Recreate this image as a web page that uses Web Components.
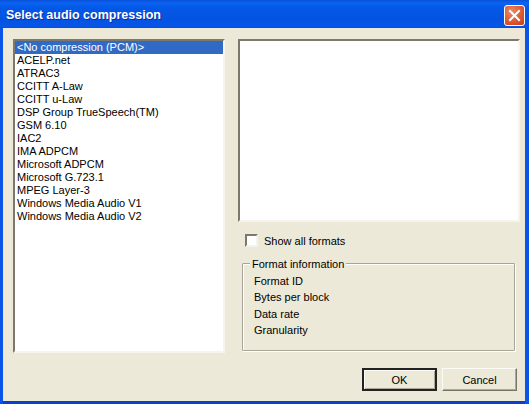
<!DOCTYPE html>
<html><head><meta charset="utf-8"><style>
html,body{margin:0;padding:0;width:529px;height:404px;overflow:hidden;background:#0a3fd0}
body{font:11px "Liberation Sans",sans-serif;color:#000}
</style></head><body>
<xp-dialog heading="Select audio compression">
  <div slot="left">
    <xp-list>
      <xp-item selected>&lt;No compression (PCM)&gt;</xp-item>
      <xp-item>ACELP.net</xp-item><xp-item>ATRAC3</xp-item><xp-item>CCITT A-Law</xp-item><xp-item>CCITT u-Law</xp-item>
      <xp-item>DSP Group TrueSpeech(TM)</xp-item><xp-item>GSM 6.10</xp-item><xp-item>IAC2</xp-item><xp-item>IMA ADPCM</xp-item>
      <xp-item>Microsoft ADPCM</xp-item><xp-item>Microsoft G.723.1</xp-item><xp-item>MPEG Layer-3</xp-item>
      <xp-item>Windows Media Audio V1</xp-item><xp-item>Windows Media Audio V2</xp-item>
    </xp-list>
  </div>
  <xp-panel slot="right"></xp-panel>
  <xp-check slot="right">Show all formats</xp-check>
  <xp-group slot="right" legend="Format information">
    <span>Format ID</span><span>Bytes per block</span><span>Data rate</span><span>Granularity</span>
  </xp-group>
  <xp-button slot="buttons" default>OK</xp-button>
  <xp-button slot="buttons">Cancel</xp-button>
</xp-dialog>
<script>
function def(name,html,init){customElements.define(name,class extends HTMLElement{connectedCallback(){if(this.shadowRoot)return;const r=this.attachShadow({mode:'open'});r.innerHTML=html;if(init)init(this,r);}});}
def('xp-dialog',`<style>
:host{display:flex;flex-direction:column;width:529px;height:404px;box-sizing:border-box;background:linear-gradient(90deg,#0a55e8 0,#0a55e8 100%)}
.title{height:28px;flex:none;box-sizing:border-box;display:flex;align-items:center;justify-content:space-between;padding:2px 4px 0 6px;background:linear-gradient(#0a50d8 0,#0a64f2 3px,#0458e6 8px,#0453e2 20px,#0556ea 26px,#0a4cd4 28px);color:#fff;font:bold 12.5px "Liberation Sans",sans-serif;text-shadow:1px 1px 0 #0a2f9c}
.close{width:21px;height:21px;box-sizing:border-box;border:1px solid #fff;border-radius:3px;background:radial-gradient(circle at 35% 30%,#e88a6c,#dc5a34 55%,#c23c1c);display:flex;align-items:center;justify-content:center}
.body{flex:1;min-height:0;margin:0 4px 3px 3px;background:#ece9d8;display:flex;flex-direction:column;padding:11px 8px 10px 10px;box-shadow:0 3px 0 #0a3fc8}
.main{flex:none;height:314px;display:grid;grid-template-columns:212px 282px;column-gap:13px}
.right{display:flex;flex-direction:column;min-height:0}
.buttons{display:flex;justify-content:flex-end;gap:5px;margin-top:15px}
</style>
<div class="title"><span id="t"></span><div class="close"><svg width="13" height="13" viewBox="0 0 13 13"><path d="M2 2 L11 11 M11 2 L2 11" stroke="#fff" stroke-width="2" stroke-linecap="square" fill="none"/></svg></div></div>
<div class="body"><div class="main"><slot name="left"></slot><div class="right"><slot name="right"></slot></div></div><div class="buttons"><slot name="buttons"></slot></div></div>`,(h,r)=>{r.getElementById('t').textContent=h.getAttribute('heading');});
def('xp-list',`<style>
:host{display:block;height:314px;box-sizing:border-box;background:#fff;border:2px solid;border-color:#7c786c #f6f4ec #f6f4ec #7c786c}
</style><slot></slot>`);
def('xp-item',`<style>
:host{display:block;height:13px;line-height:13px;padding-left:2px;white-space:nowrap}
:host([selected]){background:#316ac5;color:#fff}
</style><slot></slot>`);
def('xp-panel',`<style>
:host{display:block;height:183px;flex:none;box-sizing:border-box;background:#fff;border:2px solid;border-color:#7c786c #f6f4ec #f6f4ec #7c786c}
</style>`);
def('xp-check',`<style>
:host{display:flex;align-items:center;gap:6px;height:13px;margin:12px 0 0 7px;flex:none}
.b{width:13px;height:13px;box-sizing:border-box;background:#fff;border:2px solid;border-color:#7c786c #f4f2ea #f4f2ea #7c786c}
</style><div class="b"></div><span><slot></slot></span>`);
def('xp-group',`<style>
:host{display:block;position:relative;flex:none;box-sizing:border-box;height:88px;width:273px;margin:16px 0 0 4px;border:1px solid #a8a498;box-shadow:inset 1px 1px 0 #fff,1px 1px 0 #fff;border-radius:1px}
.l{position:absolute;left:7px;top:-6px;background:#ece9d8;padding:0 2px;line-height:13px;white-space:nowrap}
.c{display:flex;flex-direction:column;gap:3.3px;padding:11px 0 0 11px}
::slotted(span){display:block;line-height:13px}
</style><div class="l" id="l"></div><div class="c"><slot></slot></div>`,(h,r)=>{r.getElementById('l').textContent=h.getAttribute('legend');});
def('xp-button',`<style>
:host{display:flex;align-items:center;justify-content:center;width:75px;height:23px;box-sizing:border-box;background:#ece9d8;border:1px solid;border-color:#fbfaf5 #77746a #77746a #fbfaf5;box-shadow:inset -1px -1px 0 #aca899}
:host([default]){border:2px solid #222;box-shadow:inset 1px 1px 0 #fbfaf5,inset -1px -1px 0 #aca899}
</style><slot></slot>`);
</script>
</body></html>
